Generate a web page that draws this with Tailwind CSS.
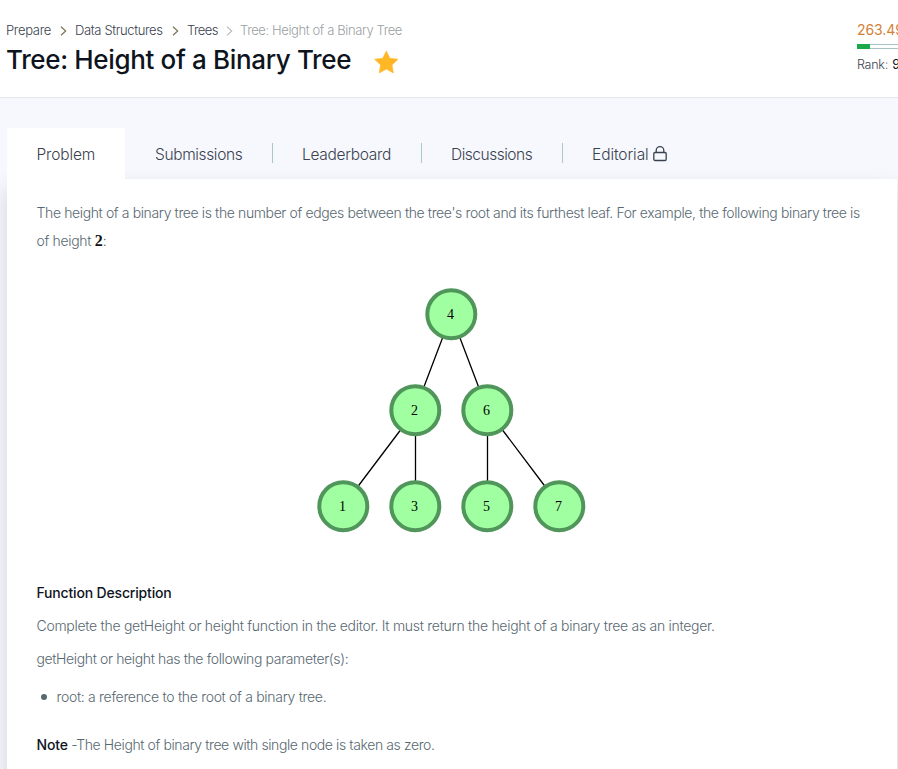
<!DOCTYPE html>
<html lang="en">
<head>
<meta charset="utf-8">
<title>Tree: Height of a Binary Tree</title>
<script src="https://cdn.jsdelivr.net/npm/@tailwindcss/browser@4"></script>
</head>
<body class="w-[898px] h-[769px] overflow-hidden bg-[#f6f8fe] font-['Inter',sans-serif] font-light text-[#576871] whitespace-nowrap">
<header class="flex h-[98px] justify-between overflow-hidden border-b border-[#e3e6ea] bg-white pl-[7px]">
  <div class="pt-[21px]">
    <nav class="flex h-5 items-center text-[13px] text-[#39424e]">
      <a class="-ml-px w-[54px] tracking-[-0.32px]">Prepare</a>
      <svg class="mr-[8px] h-2.5 w-[7px]" viewBox="0 0 7 10" fill="none" stroke="#7a7355" stroke-width="1.2"><path d="M1 .7 5.7 5 1 9.3"/></svg>
      <a class="w-[97px] tracking-[-0.37px]">Data Structures</a>
      <svg class="mr-[8px] h-2.5 w-[7px]" viewBox="0 0 7 10" fill="none" stroke="#7a7355" stroke-width="1.2"><path d="M1 .7 5.7 5 1 9.3"/></svg>
      <a class="w-[39px] tracking-[-0.6px]">Trees</a>
      <svg class="mr-[7px] h-2.5 w-[7px]" viewBox="0 0 7 10" fill="none" stroke="#b8b8b8" stroke-width="1.1"><path d="M1 .7 5.7 5 1 9.3"/></svg>
      <span class="tracking-[-0.39px] text-[#9a9fa3]">Tree: Height of a Binary Tree</span>
    </nav>
    <div class="flex h-10 items-center">
      <h1 class="-mt-[3px] -ml-px w-[368px] text-[26px] font-medium tracking-[-0.35px] text-[#0e141e]">Tree: Height of a Binary Tree</h1>
      <svg class="mt-px h-6 w-[25px]" viewBox="0 0 25 24" fill="#ffb726" stroke="#ffb726" stroke-width=".6" stroke-linejoin="round"><path d="m12.300.9 3.500 7.300 8.200 1.100-6 5.700 1.400 8-7.100-3.900-7.100 3.900 1.400-8-6-5.700 8.200-1.100z"/></svg>
    </div>
  </div>
  <aside class="w-[41px] pt-5">
    <div class="h-[22px] text-[14px] leading-[20px] font-normal tracking-[-0.1px] text-[#d48136]">263.49</div>
    <div class="mt-[2px] flex h-[5px] w-[120px] border-y border-[#a9c3c8]"><div class="-my-px w-[13px] bg-[#1ba94c]"></div></div>
    <div class="mt-[6px] text-[12.5px] leading-[19px] tracking-[-0.25px] text-[#39424e]">Rank: <span class="ml-[1px] font-normal text-[#0e141e]">9</span></div>
  </aside>
</header>
<main class="mt-[30px] ml-[7px] w-[890px]">
  <div class="flex h-[51px] items-center text-[15.5px] text-[#39424e]">
    <a class="relative z-10 h-[51px] w-[118px] bg-white pl-[29.5px] leading-[53px] tracking-[-0.14px]">Problem</a>
    <a class="-mt-px h-5 w-[148px] border-r border-[#aac6c9] pl-[30px] leading-[23px] tracking-[-0.36px]">Submissions</a>
    <a class="-mt-px h-5 w-[149px] border-r border-[#aac6c9] pl-[29px] leading-[23px] tracking-[-0.3px]">Leaderboard</a>
    <a class="-mt-px h-5 w-[141px] border-r border-[#aac6c9] pl-[29px] leading-[23px] tracking-[-0.48px]">Discussions</a>
    <a class="-mt-px flex h-5 pl-[29px] leading-[23px]"><span class="w-[61px] tracking-[-0.08px]">Editorial</span><svg class="mt-[3px] h-4 w-[14px]" viewBox="0 0 14 16" fill="none" stroke="#39424e" stroke-width="1.3"><rect x=".8" y="6.500" width="12.400" height="8" rx="1.200"/><path d="M3.200 6.500V4.500a3.800 3.800 0 0 1 7.600 0v2"/></svg></a>
  </div>
  <article class="h-[620px] bg-white px-[29.5px] pt-[20px] text-[14px] shadow-[0_10px_20px_0_rgba(0,0,0,0.15)]">
    <p class="leading-7"><span class="tracking-[-0.383px]">The height of a binary tree is the number of edges between the tree's root and its furthest leaf. For example, the following binary tree is</span><br><span class="tracking-[-0.33px]">of height </span><b class="font-['Liberation_Serif',serif] text-[16px] leading-none font-bold text-[#111]">2</b>:</p>
    <svg class="mt-[33px] ml-[280.5px] h-[246px] w-[270px]" viewBox="317 288 270 246">
      <g stroke="#000" stroke-width="1.300"><path d="m442.500 338-19 50M460 338l19 50M400.500 430l-43 57M415.500 434v48M487.500 434v48M502.500 430l43 57"/></g>
      <g fill="#a0ffa0" stroke="#50965a" stroke-width="4"><circle cx="451.300" cy="314.200" r="24"/><circle cx="415.300" cy="410.200" r="24"/><circle cx="487.300" cy="410.200" r="24"/><circle cx="343.300" cy="506.200" r="24"/><circle cx="415.300" cy="506.200" r="24"/><circle cx="487.300" cy="506.200" r="24"/><circle cx="559.300" cy="506.200" r="24"/></g>
      <g class="font-['Liberation_Serif',serif] text-[14px] font-normal" text-anchor="middle"><text x="450.500" y="319">4</text><text x="414.500" y="415">2</text><text x="486.500" y="415">6</text><text x="342.500" y="511">1</text><text x="414.500" y="511">3</text><text x="486.500" y="511">5</text><text x="558.500" y="511">7</text></g>
    </svg>
    <h2 class="mt-[49px] leading-5 font-medium tracking-[-0.17px] text-[#0e141e]">Function Description</h2>
    <p class="mt-[13px] leading-5 tracking-[-0.281px]">Complete the getHeight or height function in the editor. It must return the height of a binary tree as an integer.</p>
    <p class="mt-[13px] leading-5 tracking-[-0.37px]">getHeight or height has the following parameter(s):</p>
    <ul class="mt-[18px]"><li class="flex items-center leading-5 tracking-[-0.31px]"><span class="mr-[10px] ml-1 size-[6px] rounded-full bg-[#576871]"></span>root: a reference to the root of a binary tree.</li></ul>
    <p class="mt-[28px] leading-5 tracking-[-0.4px]"><strong class="font-medium tracking-[-0.15px] text-[#0e141e]">Note</strong> -The Height of binary tree with single node is taken as zero.</p>
  </article>
</main>
</body>
</html>
